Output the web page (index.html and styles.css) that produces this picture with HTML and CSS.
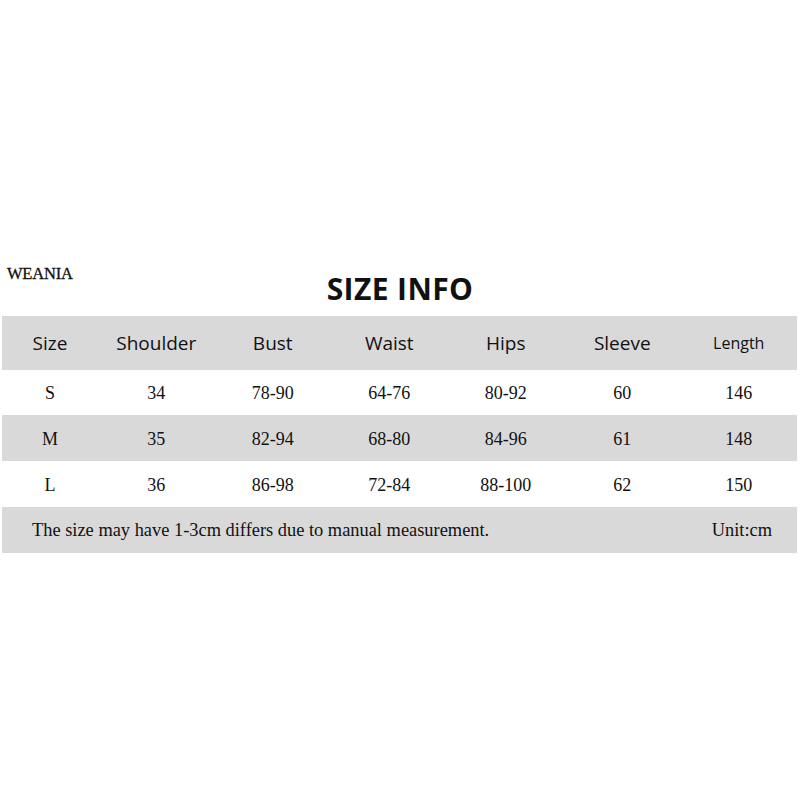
FILE: index.html
```html
<!DOCTYPE html>
<html lang="en">
<head>
<meta charset="utf-8">
<title>Size Info</title>
<link rel="stylesheet" href="styles.css">
</head>
<body>
<div class="page">
  <div class="brand">WEANIA</div>
  <h1 class="title">SIZE INFO</h1>
  <div class="chart">
    <div class="row head">
      <div class="cell">Size</div>
      <div class="cell">Shoulder</div>
      <div class="cell">Bust</div>
      <div class="cell">Waist</div>
      <div class="cell">Hips</div>
      <div class="cell">Sleeve</div>
      <div class="cell small">Length</div>
    </div>
    <div class="row data r1">
      <div class="cell">S</div>
      <div class="cell">34</div>
      <div class="cell">78-90</div>
      <div class="cell">64-76</div>
      <div class="cell">80-92</div>
      <div class="cell">60</div>
      <div class="cell">146</div>
    </div>
    <div class="row data shade">
      <div class="cell">M</div>
      <div class="cell">35</div>
      <div class="cell">82-94</div>
      <div class="cell">68-80</div>
      <div class="cell">84-96</div>
      <div class="cell">61</div>
      <div class="cell">148</div>
    </div>
    <div class="row data">
      <div class="cell">L</div>
      <div class="cell">36</div>
      <div class="cell">86-98</div>
      <div class="cell">72-84</div>
      <div class="cell">88-100</div>
      <div class="cell">62</div>
      <div class="cell">150</div>
    </div>
    <div class="foot">
      <span>The size may have 1-3cm differs due to manual measurement.</span>
      <span>Unit:cm</span>
    </div>
  </div>
</div>
</body>
</html>
```

FILE: styles.css
```css
html, body {
  margin: 0;
  padding: 0;
  background: #ffffff;
}

.page {
  width: 800px;
  height: 800px;
  padding-top: 266px;
  box-sizing: border-box;
  color: #111111;
}

.brand {
  margin-left: 7px;
  font-family: "Liberation Serif", "Times New Roman", serif;
  font-size: 16.5px;
  line-height: 16px;
  height: 16px;
  letter-spacing: -0.2px;
  -webkit-text-stroke: 0.3px #111111;
}

.title {
  margin: -7px 0 0 0;
  text-align: center;
  font-family: "Open Sans", "Liberation Sans", sans-serif;
  font-weight: 700;
  font-size: 30px;
  line-height: 28px;
  letter-spacing: 0.4px;
}

.chart {
  margin: 13px 0 0 2px;
  width: 795px;
}

.row {
  display: grid;
  grid-template-columns: 96px repeat(6, 1fr);
  align-items: center;
}

.cell {
  text-align: center;
}

.head {
  height: 54px;
  background: #d9d9d9;
  font-family: "Open Sans", "Liberation Sans", sans-serif;
  font-size: 19px;
}

.head .small {
  font-size: 16px;
}

.data {
  height: 46px;
  padding-top: 2px;
  box-sizing: border-box;
  font-family: "Liberation Serif", "Times New Roman", serif;
  font-size: 18px;
}

.data.r1 {
  height: 45px;
}

.shade {
  background: #d9d9d9;
}

.foot {
  height: 46px;
  background: #d9d9d9;
  display: flex;
  align-items: center;
  justify-content: space-between;
  padding: 0 25px 0 30px;
  font-family: "Liberation Serif", "Times New Roman", serif;
  font-size: 18.4px;
}
```
